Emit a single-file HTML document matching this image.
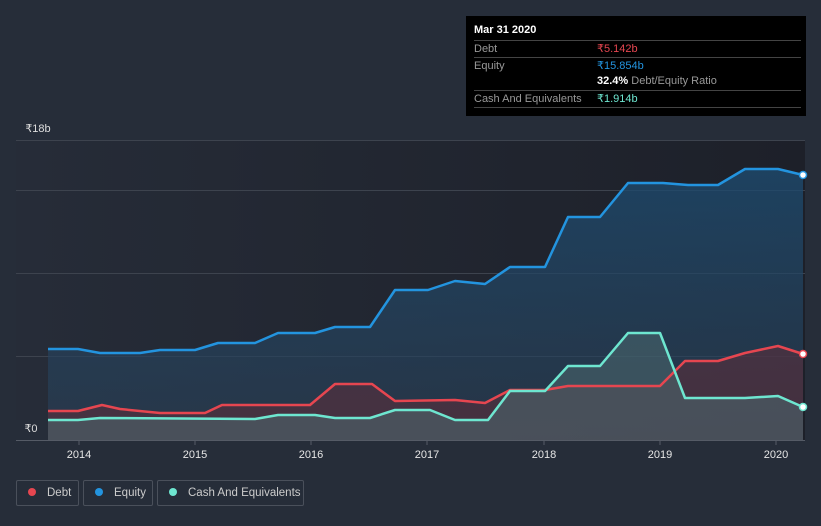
<!DOCTYPE html>
<html><head><style>
html,body{margin:0;width:821px;height:526px;overflow:hidden}
body{background:#262d39;font-family:"Liberation Sans",sans-serif;position:relative}
.tt{position:absolute;left:466px;top:16px;width:340px;height:100px;background:#000;color:#fff;font-size:11px}
.row{position:absolute;left:8px;width:327px;border-top:1px solid #444;height:16px;line-height:16px}
.lab{color:#999}
.leg{position:absolute;top:480px;height:26px;border:1px solid #4a505b;border-radius:2px;color:#ccc;font-size:11.5px;line-height:25px;box-sizing:border-box;white-space:nowrap}
.dot{display:inline-block;width:8px;height:8px;border-radius:50%;margin:0 11px 0 11px;vertical-align:0px}
</style></head><body>
<svg width="821" height="526" style="position:absolute;left:0;top:0">
<defs>
<linearGradient id="bg" x1="0" x2="1"><stop offset="0" stop-color="#262c38"/><stop offset="1" stop-color="#1d2029"/></linearGradient>
<linearGradient id="eq" x1="0" y1="0" x2="0" y2="1"><stop offset="0" stop-color="#1d4a6e" stop-opacity=".8"/><stop offset="1" stop-color="#2a3f55" stop-opacity=".6"/></linearGradient>
</defs>
<rect x="16" y="140" width="789" height="300" fill="url(#bg)"/>
<g stroke="#3d434e" stroke-width="1"><line x1="16" y1="140.5" x2="805" y2="140.5"/><line x1="16" y1="190.5" x2="805" y2="190.5"/><line x1="16" y1="273.5" x2="805" y2="273.5"/><line x1="16" y1="356.5" x2="805" y2="356.5"/></g>
<path d="M48,349 L78,349 L100,353 L140,353 L160,350 L195,350 L218,343 L255,343 L278,333 L315,333 L335,327 L370,327 L395,290 L428,290 L455,281 L485,284 L510,267 L545,267 L568,217 L600,217 L628,183 L663,183 L688,185 L718,185 L745,169 L778,169 L803,175 L803,440 L48,440Z" fill="url(#eq)"/>
<path d="M48,411 L78,411 L102,405 L120,409 L160,413 L205,413 L222,405 L310,405 L335,384 L372,384 L395,401 L455,400 L485,403 L510,390 L545,390 L568,386 L660,386 L685,361 L718,361 L745,353 L778,346 L803,354 L803,440 L48,440Z" fill="#5a2f3c" fill-opacity=".6"/>
<path d="M48,420 L78,420 L100,418 L255,419 L278,415 L315,415 L335,418 L370,418 L395,410 L430,410 L455,420 L488,420 L510,391 L545,391 L568,366 L600,366 L628,333 L660,333 L685,398 L745,398 L778,396 L803,407 L803,440 L48,440Z" fill="#4c6a70" fill-opacity=".55"/>
<g fill="none" stroke-width="2.5" stroke-linejoin="round">
<path d="M48,349 L78,349 L100,353 L140,353 L160,350 L195,350 L218,343 L255,343 L278,333 L315,333 L335,327 L370,327 L395,290 L428,290 L455,281 L485,284 L510,267 L545,267 L568,217 L600,217 L628,183 L663,183 L688,185 L718,185 L745,169 L778,169 L803,175" stroke="#2394df"/>
<path d="M48,411 L78,411 L102,405 L120,409 L160,413 L205,413 L222,405 L310,405 L335,384 L372,384 L395,401 L455,400 L485,403 L510,390 L545,390 L568,386 L660,386 L685,361 L718,361 L745,353 L778,346 L803,354" stroke="#e64650"/>
<path d="M48,420 L78,420 L100,418 L255,419 L278,415 L315,415 L335,418 L370,418 L395,410 L430,410 L455,420 L488,420 L510,391 L545,391 L568,366 L600,366 L628,333 L660,333 L685,398 L745,398 L778,396 L803,407" stroke="#6ee6d0"/>
</g>
<circle cx="803" cy="175" r="3.5" fill="#fff" stroke="#2394df" stroke-width="1.5"/>
<circle cx="803" cy="354" r="3.5" fill="#fff" stroke="#e64650" stroke-width="1.5"/>
<circle cx="803" cy="407" r="3.5" fill="#fff" stroke="#6ee6d0" stroke-width="1.5"/>
<rect x="16" y="420" width="32" height="20" fill="#262d39"/>
<line x1="16" y1="440.5" x2="805" y2="440.5" stroke="#555b66"/>
<g stroke="#555b66"><line x1="79" y1="440" x2="79" y2="445"/><line x1="195" y1="440" x2="195" y2="445"/><line x1="311" y1="440" x2="311" y2="445"/><line x1="427" y1="440" x2="427" y2="445"/><line x1="544" y1="440" x2="544" y2="445"/><line x1="660" y1="440" x2="660" y2="445"/><line x1="776" y1="440" x2="776" y2="445"/></g>
<g fill="#e6e6e6" font-size="11" text-anchor="middle" font-family="Liberation Sans,sans-serif">
<text x="79" y="458">2014</text><text x="195" y="458">2015</text><text x="311" y="458">2016</text><text x="427" y="458">2017</text><text x="544" y="458">2018</text><text x="660" y="458">2019</text><text x="776" y="458">2020</text>
<text x="31" y="432" fill="#ddd">₹0</text><text x="38" y="132" fill="#ddd">₹18b</text>
</g>
</svg>
<div class="tt">
<div style="position:absolute;left:8px;top:8px;font-weight:bold;font-size:11px">Mar 31 2020</div>
<div class="row" style="top:24px"><span class="lab">Debt</span><span style="position:absolute;left:123px;color:#e64650">₹5.142b</span></div>
<div class="row" style="top:41px"><span class="lab">Equity</span><span style="position:absolute;left:123px;color:#2394df">₹15.854b</span></div>
<div class="row" style="top:57px;border:none"><span style="position:absolute;left:123px"><b>32.4%</b> <span class="lab">Debt/Equity Ratio</span></span></div>
<div class="row" style="top:74px;border-bottom:1px solid #444"><span class="lab">Cash And Equivalents</span><span style="position:absolute;left:123px;color:#6ee6d0">₹1.914b</span></div>
</div>
<div class="leg" style="left:16px;width:63px"><span class="dot" style="background:#e64650"></span>Debt</div>
<div class="leg" style="left:83px;width:70px"><span class="dot" style="background:#2394df"></span>Equity</div>
<div class="leg" style="left:157px;width:147px"><span class="dot" style="background:#6ee6d0"></span>Cash And Equivalents</div>
</body></html>
